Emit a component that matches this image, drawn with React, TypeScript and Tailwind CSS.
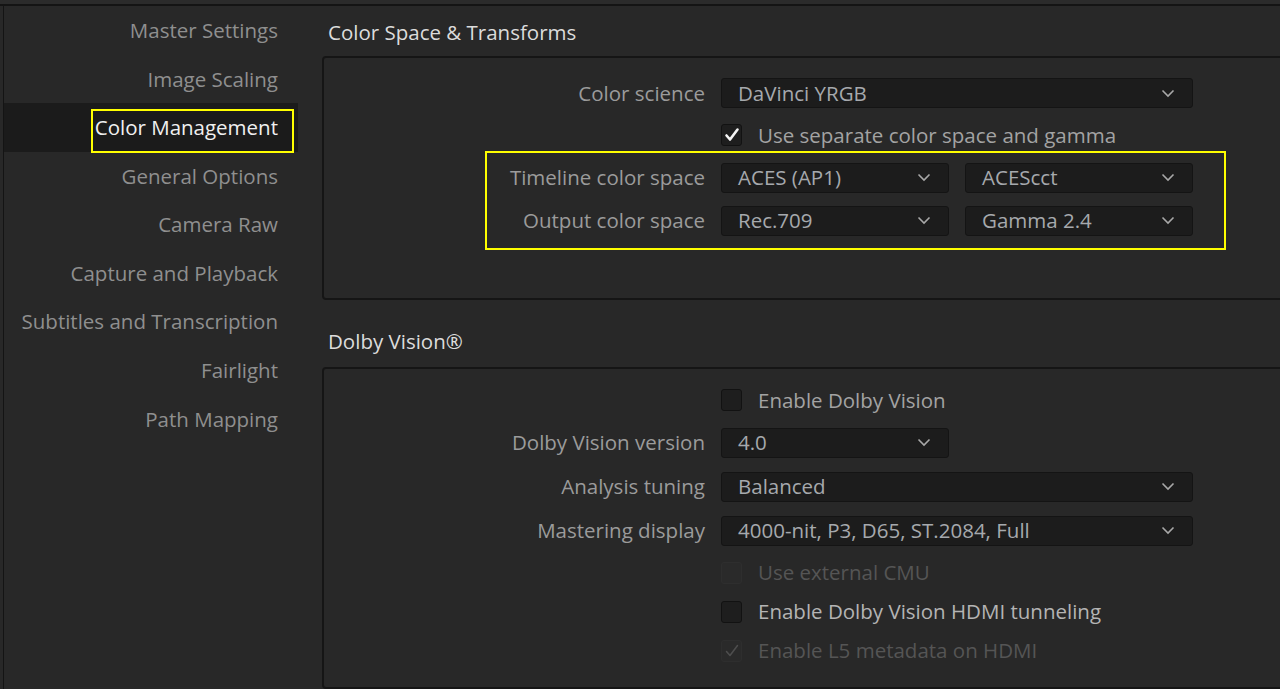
import React from "react";

const FONT = { fontFamily: '"Open Sans", "Noto Sans", sans-serif' };

const navItems = [
  "Master Settings",
  "Image Scaling",
  "Color Management",
  "General Options",
  "Camera Raw",
  "Capture and Playback",
  "Subtitles and Transcription",
  "Fairlight",
  "Path Mapping",
];

function Chevron() {
  return (
    <svg width="14" height="9" viewBox="0 0 14 9" className="shrink-0">
      <path d="M1.5 1.5 L7 7 L12.5 1.5" fill="none" stroke="#a8a8a8" strokeWidth="1.6" />
    </svg>
  );
}

function Select({ value, wide }: { value: string; wide?: boolean }) {
  return (
    <div
      className={`flex h-[30px] items-center justify-between rounded-[3px] border border-[#141414] bg-[#1c1c1c] pl-[16px] pr-[17px] text-[20.5px] text-[#a6a9ad] ${
        wide ? "w-[472px]" : "w-[228px]"
      }`}
    >
      <span className="leading-none">{value}</span>
      <Chevron />
    </div>
  );
}

function Check({ checked, disabled }: { checked?: boolean; disabled?: boolean }) {
  return (
    <div
      className={`flex h-[22px] w-[21px] items-center justify-center rounded-[3px] border ${
        disabled ? "border-[#2e2e2e] bg-[#2a2a2a]" : "border-[#121212] bg-[#1e1e1e]"
      }`}
    >
      {checked && (
        <svg width="16" height="16" viewBox="0 0 16 16">
          <path
            d="M2.5 8.5 L6 12.5 L13.5 2.5"
            fill="none"
            stroke={disabled ? "#4e4e4e" : "#f4f4f4"}
            strokeWidth={disabled ? 1.5 : 2.6}
            strokeLinecap="round"
            strokeLinejoin="round"
          />
        </svg>
      )}
    </div>
  );
}

function Row({
  label,
  h,
  children,
}: {
  label?: string;
  h: string;
  children: React.ReactNode;
}) {
  return (
    <div className={`flex items-center ${h}`}>
      <div className="w-[381px] text-right text-[20.5px] text-[#9b9b9b]">{label}</div>
      <div className="ml-[16px] flex items-center gap-[16px]">{children}</div>
    </div>
  );
}

function CheckRow({
  label,
  h,
  checked,
  disabled,
  bright,
}: {
  label: string;
  h: string;
  checked?: boolean;
  disabled?: boolean;
  bright?: boolean;
}) {
  return (
    <div className={`flex items-center ${h}`}>
      <div className="w-[381px]" />
      <div className="ml-[16px] flex items-center gap-[16px]">
        <Check checked={checked} disabled={disabled} />
        <span
          className={`text-[20.5px] ${
            disabled ? "text-[#555555]" : bright ? "text-[#b4b4b4]" : "text-[#a3a3a3]"
          }`}
        >
          {label}
        </span>
      </div>
    </div>
  );
}

export default function App() {
  return (
    <div
      style={FONT}
      className="flex h-[689px] w-[1280px] flex-col overflow-hidden bg-[#282828]"
    >
      {/* window top strip */}
      <div className="h-[6px] shrink-0 border-b-2 border-[#141414] bg-[#2b2b2b]" />

      <div className="ml-[3px] flex flex-1 border-l border-[#141414]">
        {/* settings categories */}
        <nav className="flex w-[294px] shrink-0 flex-col">
          {navItems.map((item) => {
            const active = item === "Color Management";
            return (
              <div
                key={item}
                className={`flex h-[48.6px] items-center justify-end pr-[20px] text-[20.5px] ${
                  active ? "bg-[#1b1b1b] text-[#f0f0f0]" : "text-[#8f8f8f]"
                }`}
              >
                <span className="relative">
                  {item}
                  {active && (
                    <span className="pointer-events-none absolute -left-[4px] -right-[16px] -top-[3px] -bottom-[10px] border-2 border-[#ffff00]" />
                  )}
                </span>
              </div>
            );
          })}
        </nav>

        {/* settings panel */}
        <main className="flex flex-1 flex-col pl-[24px]">
          <div className="flex h-[50px] items-center pl-[6px] pt-[2px] text-[20.5px] font-medium text-[#dcdcdc]">
            Color Space &amp; Transforms
          </div>
          <section className="relative -mr-[10px] h-[244px] rounded-[4px] border-2 border-[#151515] pt-[19px]">
            <Row label="Color science" h="h-[32px]">
              <Select value="DaVinci YRGB" wide />
            </Row>
            <CheckRow label="Use separate color space and gamma" h="h-[52px]" checked />
            <Row label="Timeline color space" h="h-[33px]">
              <Select value="ACES (AP1)" />
              <Select value="ACEScct" />
            </Row>
            <div className="h-[11px]" />
            <Row label="Output color space" h="h-[31px]">
              <Select value="Rec.709" />
              <Select value="Gamma 2.4" />
            </Row>
            <span className="pointer-events-none absolute left-[161px] top-[93px] h-[99px] w-[741px] border-2 border-[#ffff00]" />
          </section>

          <div className="flex h-[67px] items-center pl-[6px] pt-[16px] text-[20.5px] font-medium text-[#dcdcdc]">
            Dolby Vision®
          </div>
          <section className="-mr-[10px] flex-1 rounded-[4px] border-2 border-[#151515] pt-[16px]">
            <CheckRow label="Enable Dolby Vision" h="h-[30px]" />
            <div className="h-[12px]" />
            <Row label="Dolby Vision version" h="h-[31px]">
              <Select value="4.0" />
            </Row>
            <div className="h-[13px]" />
            <Row label="Analysis tuning" h="h-[31px]">
              <Select value="Balanced" wide />
            </Row>
            <div className="h-[13px]" />
            <Row label="Mastering display" h="h-[31px]">
              <Select value="4000-nit, P3, D65, ST.2084, Full" wide />
            </Row>
            <CheckRow label="Use external CMU" h="h-[53px]" disabled />
            <CheckRow label="Enable Dolby Vision HDMI tunneling" h="h-[25px]" bright />
            <CheckRow label="Enable L5 metadata on HDMI" h="h-[53px]" checked disabled />
          </section>
        </main>
      </div>
    </div>
  );
}
